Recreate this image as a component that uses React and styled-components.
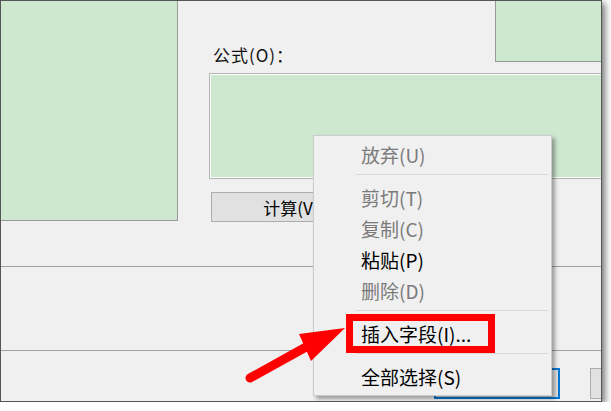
import React from "react";
import styled, { createGlobalStyle } from "styled-components";

const GlobalStyle = createGlobalStyle`
  body {
    margin: 0;
    background: #ffffff;
    font-family: "Noto Sans CJK SC", "Noto Sans", sans-serif;
  }
`;

const Window = styled.div`
  position: relative;
  width: 600px;
  height: 400px;
  border: 1px solid #555555;
  background: #f0f0f0;
  overflow: hidden;
  box-shadow: 3px 3px 7px rgba(0, 0, 0, 0.55);
`;

const TopSection = styled.section`
  display: flex;
  height: 265px;
  border-bottom: 1px solid #a0a0a0;
`;

const SidePanel = styled.div`
  width: 176px;
  height: 219px;
  background: #cee8d0;
  border-right: 1px solid #9a9a9a;
  border-bottom: 1px solid #9a9a9a;
`;

const FormulaArea = styled.div`
  flex: 1;
  display: flex;
  flex-direction: column;
  padding-left: 31px;
`;

const HeaderRow = styled.div`
  display: flex;
  justify-content: space-between;
  height: 72px;
`;

const Label = styled.label`
  align-self: flex-end;
  margin: 0 0 8px 4px;
  font-size: 17px;
  line-height: 20px;
  letter-spacing: 1px;
  color: #111;
`;

const CornerPanel = styled.div`
  align-self: flex-start;
  width: 105px;
  height: 60px;
  background: #cee8d0;
  border-left: 1px solid #939a9a;
  border-bottom: 1px solid #939a9a;
`;

const FormulaBox = styled.div`
  height: 104px;
  background: #cee8d0;
  border: 1px solid #b4b4b4;
  border-right: none;
  box-shadow: inset 1px 1px 0 #fff, inset 0 -1px 0 #fff;
`;

const CalcButton = styled.button`
  width: 160px;
  height: 30px;
  margin: 13px 0 0 2px;
  background: #e1e1e1;
  border: 1px solid #adadad;
  font-family: inherit;
  font-size: 17px;
  color: #000;
  padding: 0;
`;

const MiddleSection = styled.section`
  height: 83px;
  border-bottom: 1px solid #a0a0a0;
`;

const Footer = styled.footer`
  display: flex;
  gap: 30px;
  padding: 17px 0 0 433px;
`;

const DialogButton = styled.button`
  flex: none;
  box-sizing: border-box;
  width: 126px;
  height: 31px;
  padding: 0;
  background: #e1e1e1;
  border: ${(p) => (p.$primary ? "2px solid #0078d7" : "1px solid #adadad")};
  font-family: inherit;
  font-size: 17px;
  color: #000;
`;

const ContextMenu = styled.ul`
  position: absolute;
  left: 312px;
  top: 134px;
  width: 237px;
  margin: 0;
  padding: 4px 0 2px;
  list-style: none;
  background: #f0f0f0;
  border: 1px solid #cccccc;
  box-shadow: 3px 3px 4px rgba(0, 0, 0, 0.35);
`;

const MenuItem = styled.li`
  position: relative;
  height: 31px;
  padding-left: 47px;
  font-size: 19px;
  line-height: 30px;
  color: ${(p) => (p.$disabled ? "#7a7a7a" : "#000")};
`;

const Separator = styled.li`
  height: 9px;
  margin: 0 3px 0 42px;
  &::before {
    content: "";
    display: block;
    margin-top: 3px;
    height: 1px;
    background: #d9d9d9;
  }
`;

const Highlight = styled.span`
  position: absolute;
  left: 32px;
  top: -5px;
  width: 149px;
  height: 39px;
  box-sizing: border-box;
  border: 7px solid #ff0000;
`;

const Pointer = styled.svg`
  position: absolute;
  left: 0;
  top: 0;
  pointer-events: none;
`;

const items = [
  { label: "放弃(U)", disabled: true },
  "sep",
  { label: "剪切(T)", disabled: true },
  { label: "复制(C)", disabled: true },
  { label: "粘贴(P)" },
  { label: "删除(D)", disabled: true },
  "sep",
  { label: "插入字段(I)...", marked: true },
  "sep",
  { label: "全部选择(S)" },
];

export default function App() {
  return (
    <>
      <GlobalStyle />
      <Window>
        <TopSection>
          <SidePanel />
          <FormulaArea>
            <HeaderRow>
              <Label>公式(O)：</Label>
              <CornerPanel />
            </HeaderRow>
            <FormulaBox />
            <CalcButton>计算(V)</CalcButton>
          </FormulaArea>
        </TopSection>
        <MiddleSection />
        <Footer>
          <DialogButton $primary>确定</DialogButton>
          <DialogButton aria-label="取消" />
        </Footer>

        <ContextMenu>
          {items.map((it, i) =>
            it === "sep" ? (
              <Separator key={i} />
            ) : (
              <MenuItem key={i} $disabled={it.disabled}>
                {it.label}
                {it.marked && <Highlight />}
              </MenuItem>
            )
          )}
        </ContextMenu>

        <Pointer width="600" height="400" viewBox="1 1 600 400">
          <line
            x1="250"
            y1="378"
            x2="315"
            y2="342"
            stroke="#ff0000"
            strokeWidth="9"
            strokeLinecap="round"
          />
          <polygon points="345,328 299,334 311,361" fill="#ff0000" />
        </Pointer>
      </Window>
    </>
  );
}
